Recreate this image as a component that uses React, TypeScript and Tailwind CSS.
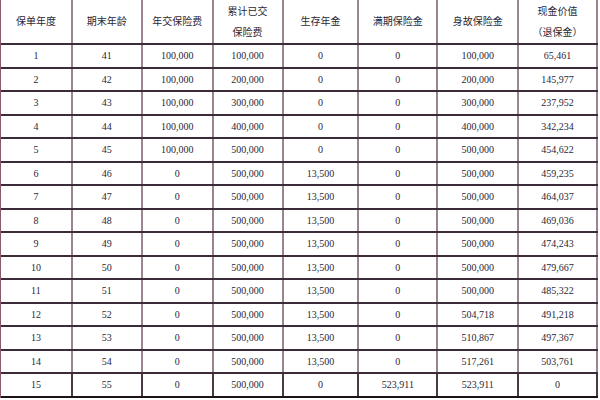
const COLS = [
  "w-[72px]",
  "w-[70px]",
  "w-[71px]",
  "w-[70px]",
  "w-[76px]",
  "w-[79px]",
  "w-[81px]",
  "w-[79px]",
];

const HEAD: string[][] = [
  ["保单年度"],
  ["期末年龄"],
  ["年交保险费"],
  ["累计已交", "保险费"],
  ["生存年金"],
  ["满期保险金"],
  ["身故保险金"],
  ["现金价值", "（退保金）"],
];

const ROWS: string[][] = [
  ["1", "41", "100,000", "100,000", "0", "0", "100,000", "65,461"],
  ["2", "42", "100,000", "200,000", "0", "0", "200,000", "145,977"],
  ["3", "43", "100,000", "300,000", "0", "0", "300,000", "237,952"],
  ["4", "44", "100,000", "400,000", "0", "0", "400,000", "342,234"],
  ["5", "45", "100,000", "500,000", "0", "0", "500,000", "454,622"],
  ["6", "46", "0", "500,000", "13,500", "0", "500,000", "459,235"],
  ["7", "47", "0", "500,000", "13,500", "0", "500,000", "464,037"],
  ["8", "48", "0", "500,000", "13,500", "0", "500,000", "469,036"],
  ["9", "49", "0", "500,000", "13,500", "0", "500,000", "474,243"],
  ["10", "50", "0", "500,000", "13,500", "0", "500,000", "479,667"],
  ["11", "51", "0", "500,000", "13,500", "0", "500,000", "485,322"],
  ["12", "52", "0", "500,000", "13,500", "0", "504,718", "491,218"],
  ["13", "53", "0", "500,000", "13,500", "0", "510,867", "497,367"],
  ["14", "54", "0", "500,000", "13,500", "0", "517,261", "503,761"],
  ["15", "55", "0", "500,000", "0", "523,911", "523,911", "0"],
];

export default function App() {
  return (
    <div
      className="h-[400px] w-[600px] overflow-hidden bg-white text-[10px] text-[#2a1f36]"
      style={{ fontFamily: '"Liberation Serif", "Noto Sans CJK SC", serif' }}
    >
      <div className="w-[598px] border-l border-[#8a5a66]">
        <div className="flex h-[45px] border-b-2 border-[#3c2c3a]">
          {HEAD.map((lines, i) => (
            <div
              key={i}
              className={`${COLS[i]} flex flex-col items-center justify-center border-r-2 border-[#9c8494] leading-[21px]`}
            >
              {lines.map((l) => (
                <span key={l}>{l}</span>
              ))}
            </div>
          ))}
        </div>
        {ROWS.map((row, r) => {
          const last = r === ROWS.length - 1;
          return (
            <div
              key={r}
              className={`flex h-[23.5px] border-b-2 ${last ? "border-[#1c1418]" : "border-[#3c2c3a]"}`}
            >
              {row.map((cell, i) => (
                <div
                  key={i}
                  className={`${COLS[i]} flex items-center justify-center border-r-2 ${last ? "border-[#4a3846]" : "border-[#9c8494]"}`}
                >
                  {cell}
                </div>
              ))}
            </div>
          );
        })}
      </div>
    </div>
  );
}
